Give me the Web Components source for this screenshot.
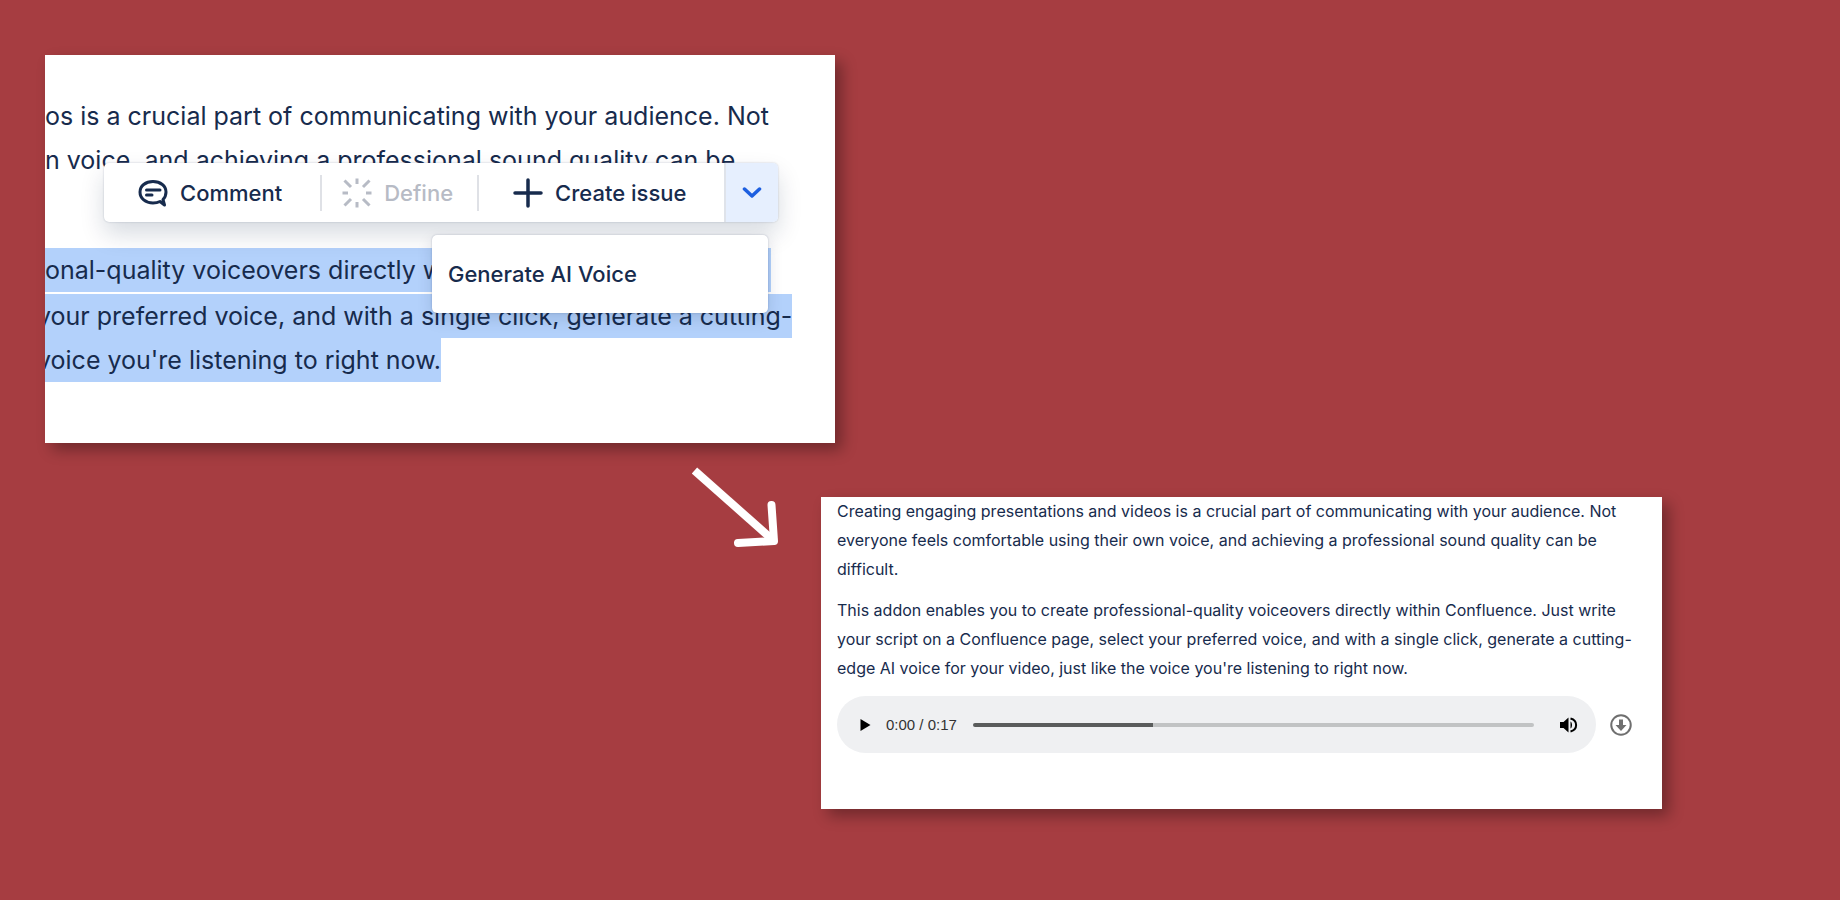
<!DOCTYPE html>
<html lang="en">
<head>
<meta charset="utf-8">
<title>Generate AI Voice</title>
<style>
body {
  margin: 0;
  min-height: 100vh;
  background: #a63d41;
  color: #172b4d;
  font-family: Inter, "Liberation Sans", sans-serif;
}
</style>
</head>
<body>
<voice-showcase>
  <app-panel slot="before">
    <selected-page></selected-page>
  </app-panel>
  <step-arrow slot="arrow"></step-arrow>
  <app-panel slot="after">
    <voiced-page>
      <p>Creating engaging presentations and videos is a crucial part of communicating with your audience. Not<br>everyone feels comfortable using their own voice, and achieving a professional sound quality can be<br>difficult.</p>
      <p>This addon enables you to create professional-quality voiceovers directly within Confluence. Just write<br>your script on a Confluence page, select your preferred voice, and with a single click, generate a cutting-<br>edge AI voice for your video, just like the voice you're listening to right now.</p>
      <audio-player slot="player" time="0:00 / 0:17" value="32"></audio-player>
    </voiced-page>
  </app-panel>
</voice-showcase>

<script>
/**
 * @param {HTMLElement} host
 * @param {string} html
 */
function render(host, html) {
  const template = document.createElement('template');
  template.innerHTML = html;
  const root = host.attachShadow({ mode: 'open' });
  root.appendChild(template.content.cloneNode(true));
  return root;
}

class VoiceShowcase extends HTMLElement {
  constructor() {
    super();
    render(this, /* html */ `
<style>
:host {
  display: grid;
  grid-template-columns:
    minmax(0, 647fr) minmax(0, 129fr) minmax(0, 14fr) minmax(0, 827fr) minmax(0, 178fr);
  padding: 55px 0 55px 45px;
}
.before { grid-area: 1 / 1 / 2 / 4; }
.arrow { grid-area: 2 / 2 / 3 / 3; padding-top: 24px; }
.after { grid-area: 2 / 3 / 3 / 5; padding-top: 54px; }
</style>
<div class="before"><slot name="before"></slot></div>
<div class="arrow"><slot name="arrow"></slot></div>
<div class="after"><slot name="after"></slot></div>
`);
  }
}

class AppPanel extends HTMLElement {
  constructor() {
    super();
    render(this, /* html */ `
<style>
:host {
  display: block;
  background: white;
  box-shadow: 7px 7px 14px rgb(0 0 0 / 32%);
}
</style>
<slot></slot>
`);
  }
}

class StepArrow extends HTMLElement {
  constructor() {
    super();
    render(this, /* html */ `
<style>
:host { display: block; }
svg { display: block; }
</style>
<svg width="88" height="84" viewBox="0 0 88 84" fill="none" stroke="white" stroke-width="8" aria-hidden="true">
  <path d="M2.500 3.500 L82 74"/>
  <path d="M79.500 38 L82 74 L46 76" stroke-linecap="round" stroke-linejoin="round"/>
</svg>
`);
  }
}

class SelectedPage extends HTMLElement {
  constructor() {
    super();
    render(this, /* html */ `
<style>
:host {
  display: block;
  position: relative;
  overflow: hidden;
  padding: 39px 0 61px;
  font-size: 25px;
  line-height: 44px;
  white-space: nowrap;
}
p { margin: 0; }
.selected { margin-top: 66px; }
.selected mark {
  display: block;
  width: fit-content;
  color: inherit;
  background: #b3d1fb;
}
.selected mark:first-child { width: 726px; margin-bottom: 2px; }
.selected .cut { margin-left: -8px; }
/* both float over the page text */
selection-toolbar { position: absolute; top: 108px; left: 59px; }
selection-menu { position: absolute; top: 180px; left: 387px; }
</style>
<p>os is a crucial part of communicating with your audience. Not<br>n voice, and achieving a professional sound quality can be</p>
<p class="selected">
  <mark>onal-quality voiceovers directly w</mark>
  <mark class="cut">your preferred voice, and with a single click, generate a cutting-</mark>
  <mark class="cut">voice you're listening to right now.</mark>
</p>
<selection-toolbar></selection-toolbar>
<selection-menu><button role="menuitem">Generate AI Voice</button></selection-menu>
`);
  }
}

class SelectionToolbar extends HTMLElement {
  constructor() {
    super();
    render(this, /* html */ `
<style>
:host {
  display: flex;
  align-items: center;
  height: 59px;
  border-radius: 5px;
  background: white;
  box-shadow: 0 12px 24px rgb(9 30 66 / 16%), 0 0 2px rgb(9 30 66 / 24%);
}
button {
  display: flex;
  align-items: center;
  gap: 12px;
  height: 100%;
  padding: 0;
  border: 0;
  background: none;
  color: inherit;
  font: 500 22px/28px Inter, "Liberation Sans", sans-serif;
  cursor: pointer;
}
button:disabled { color: #b7bbc5; cursor: default; }
svg { display: block; }
.comment { padding: 0 38px 0 34px; }
.define { padding: 0 24px 0 20px; }
.create { padding: 0 38px 0 34px; }
.rule { width: 2px; height: 36px; background: #dfe1e6; }
.more {
  justify-content: center;
  width: 54px;
  border-left: 2px solid #dfe3ea;
  border-radius: 0 5px 5px 0;
  background: #e6effe;
  color: #1d5fe0;
}
</style>
<button class="comment">
  <svg width="30" height="28" viewBox="0 0 30 28" fill="none" stroke="currentColor" stroke-width="3" stroke-linecap="round" stroke-linejoin="round" aria-hidden="true">
    <path d="M15 2.500 C7.500 2.500 2 7 2 13 C2 19.500 7.500 24 15 24 C17.500 24 20 23.500 22 22.500 L26.500 26 L25 20.500 C27 18.500 28 16 28 13 C28 7 22.500 2.500 15 2.500Z"/>
    <path d="M8.500 11 H22 M8.500 16 H14"/>
  </svg>
  Comment
</button>
<span class="rule"></span>
<button class="define" disabled>
  <svg width="30" height="30" viewBox="0 0 30 30" fill="none" stroke="currentColor" stroke-width="3" aria-hidden="true">
    <path d="M15 0.500 V6 M15 24 V29.500 M0.500 15 H6 M24 15 H29.500 M2.500 2.500 L9 9 M21 21 L27.500 27.500 M27.500 2.500 L21 9 M9 21 L2.500 27.500"/>
  </svg>
  Define
</button>
<span class="rule"></span>
<button class="create">
  <svg width="30" height="30" viewBox="0 0 30 30" fill="none" stroke="currentColor" stroke-width="3.500" stroke-linecap="round" aria-hidden="true">
    <path d="M15 2 V28 M2 15 H28"/>
  </svg>
  Create issue
</button>
<button class="more" aria-label="More actions" aria-expanded="true">
  <svg width="20" height="12" viewBox="0 0 20 12" fill="none" stroke="currentColor" stroke-width="3.500" stroke-linecap="round" stroke-linejoin="round" aria-hidden="true">
    <path d="M2.500 2 L10 9 L17.500 2"/>
  </svg>
</button>
`);
  }
}

class SelectionMenu extends HTMLElement {
  constructor() {
    super();
    render(this, /* html */ `
<style>
:host {
  display: block;
  width: 336px;
  padding: 15px 0;
  box-sizing: border-box;
  border-radius: 5px;
  background: white;
  box-shadow: 0 6px 16px rgb(9 30 66 / 14%), 0 0 2px rgb(9 30 66 / 24%);
}
::slotted(button) {
  display: block;
  width: 100%;
  padding: 10px 16px;
  border: 0;
  background: none;
  color: inherit;
  font: 500 22px/28px Inter, "Liberation Sans", sans-serif;
  text-align: left;
  cursor: pointer;
}
</style>
<slot></slot>
`);
  }

  connectedCallback() {
    this.setAttribute('role', 'menu');
  }
}

class VoicedPage extends HTMLElement {
  constructor() {
    super();
    render(this, /* html */ `
<style>
:host {
  display: block;
  padding: 0 30px 56px 16px;
  font-size: 16px;
  line-height: 29px;
}
::slotted(p) { margin: 0 0 12px; }
::slotted(audio-player) { margin-top: 13px; }
</style>
<slot></slot>
<slot name="player"></slot>
`);
  }
}

class AudioPlayer extends HTMLElement {
  constructor() {
    super();
    const time = this.getAttribute('time');
    const value = this.getAttribute('value');
    render(this, /* html */ `
<style>
:host {
  display: flex;
  align-items: center;
  gap: 14px;
}
.bar {
  display: flex;
  flex: 1;
  align-items: center;
  box-sizing: border-box;
  height: 57px;
  padding: 0 18px 0 23px;
  border-radius: 29px;
  background: #eff0f2;
}
button {
  display: block;
  padding: 0;
  border: 0;
  background: none;
  color: black;
  cursor: pointer;
}
svg { display: block; }
time {
  margin: 0 16px 0 15px;
  color: #333;
  font: 15px/20px "Liberation Sans", Arial, sans-serif;
  white-space: nowrap;
}
input {
  flex: 1;
  min-width: 0;
  height: 4px;
  margin: 0 25px 0 0;
  border-radius: 2px;
  appearance: none;
  background: linear-gradient(to right, #5a5c5c ${value}%, #c1c3c4 ${value}%);
}
input::-webkit-slider-thumb {
  appearance: none;
  width: 4px;
  height: 4px;
  opacity: 0;
}
.download { color: #6f6f6f; }
</style>
<div class="bar">
  <button aria-label="Play">
    <svg width="11" height="14" viewBox="0 0 11 14" fill="currentColor" aria-hidden="true">
      <path d="M0.500 1 L10.500 7 L0.500 13Z"/>
    </svg>
  </button>
  <time>${time}</time>
  <input type="range" min="0" max="100" value="${value}" aria-label="Seek">
  <button aria-label="Mute">
    <svg width="19" height="18" viewBox="0 0 19 18" aria-hidden="true">
      <path d="M1 6 H4.500 L9.500 1.500 V16.500 L4.500 12 H1Z" fill="currentColor"/>
      <path d="M11.500 5.500 C13.500 6.500 13.500 11.500 11.500 12.500Z" fill="currentColor"/>
      <path d="M11.500 2.500 C19 4.500 19 13.500 11.500 15.500" fill="none" stroke="currentColor" stroke-width="2"/>
    </svg>
  </button>
</div>
<button class="download" aria-label="Download">
  <svg width="22" height="22" viewBox="0 0 22 22" aria-hidden="true">
    <circle cx="11" cy="11" r="9.750" fill="none" stroke="currentColor" stroke-width="2"/>
    <path d="M9 5.500 H13 V11 H16.500 L11 17 L5.500 11 H9Z" fill="currentColor"/>
  </svg>
</button>
`);
  }
}

window.customElements.define('selection-toolbar', SelectionToolbar);
window.customElements.define('selection-menu', SelectionMenu);
window.customElements.define('selected-page', SelectedPage);
window.customElements.define('audio-player', AudioPlayer);
window.customElements.define('voiced-page', VoicedPage);
window.customElements.define('step-arrow', StepArrow);
window.customElements.define('app-panel', AppPanel);
window.customElements.define('voice-showcase', VoiceShowcase);
</script>
</body>
</html>
